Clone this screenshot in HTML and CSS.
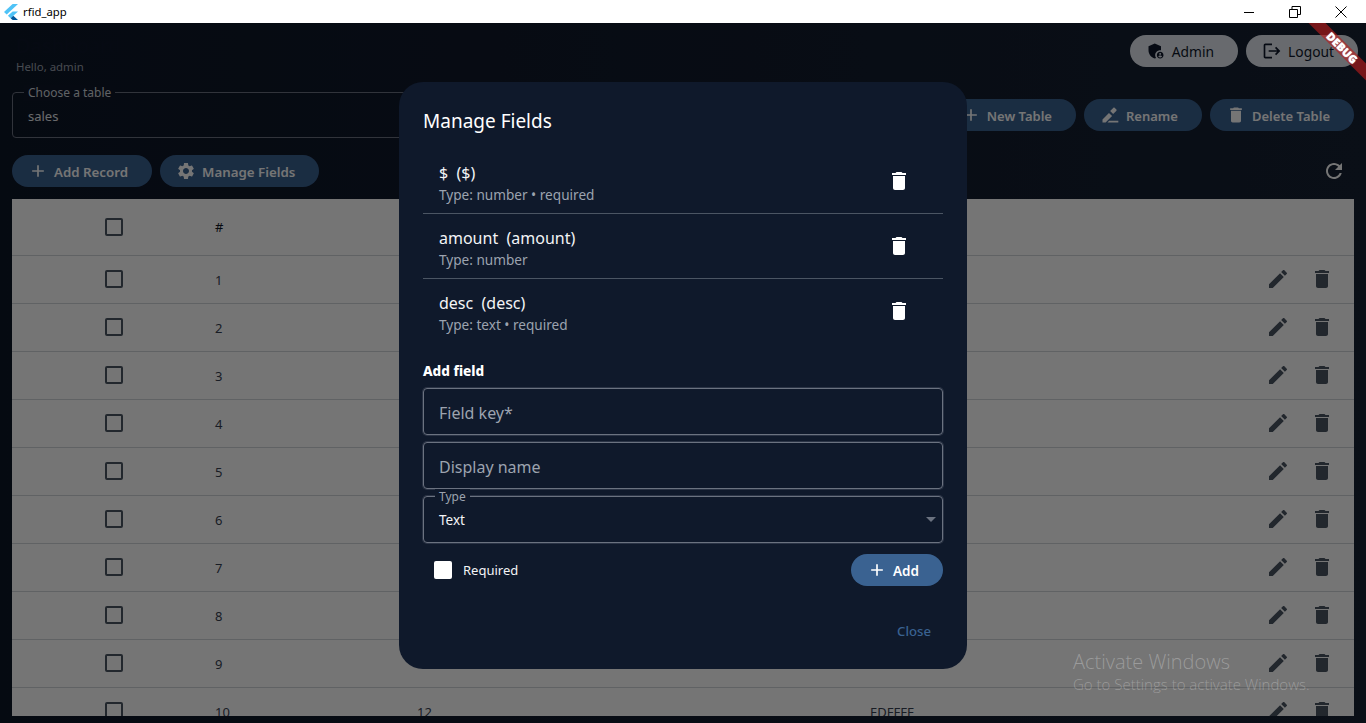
FILE: index.html
```html
<!DOCTYPE html>
<html lang="en">
<head>
<meta charset="utf-8">
<title>rfid_app</title>
<link rel="stylesheet" href="styles.css">
</head>
<body>
<svg class="sprite" width="0" height="0" aria-hidden="true">
  <defs>
    <symbol id="i-add" viewBox="0 0 24 24"><path d="M19 13h-6v6h-2v-6H5v-2h6V5h2v6h6v2z"/></symbol>
    <symbol id="i-delete" viewBox="0 0 24 24"><path d="M6 19c0 1.1.9 2 2 2h8c1.1 0 2-.9 2-2V7H6v12zM19 4h-3.5l-1-1h-5l-1 1H5v2h14V4z"/></symbol>
    <symbol id="i-edit" viewBox="0 0 24 24"><path d="M3 17.25V21h3.75L17.81 9.94l-3.75-3.75L3 17.25zM20.71 7.04c.39-.39.39-1.02 0-1.41l-2.34-2.34c-.39-.39-1.02-.39-1.41 0l-1.83 1.83 3.75 3.75 1.83-1.83z"/></symbol>
    <symbol id="i-rename" viewBox="0 0 24 24"><path d="M3 17.25V21h3.75L14.5 13.2l-3.75-3.75L3 17.25zM19.7 6.9c.39-.39.39-1.02 0-1.41l-2.2-2.2c-.39-.39-1.02-.39-1.41 0l-3.9 3.9 3.6 3.6 3.91-3.89zM11 19h11v2H9z"/></symbol>
    <symbol id="i-settings" viewBox="0 0 24 24"><path d="M19.14 12.94c.04-.3.06-.61.06-.94 0-.32-.02-.64-.07-.94l2.03-1.58c.18-.14.23-.41.12-.61l-1.92-3.32c-.12-.22-.37-.29-.59-.22l-2.39.96c-.5-.38-1.03-.7-1.62-.94l-.36-2.54c-.04-.24-.24-.41-.48-.41h-3.84c-.24 0-.43.17-.47.41l-.36 2.54c-.59.24-1.13.57-1.62.94l-2.39-.96c-.22-.08-.47 0-.59.22L2.74 8.87c-.12.21-.08.47.12.61l2.03 1.58c-.05.3-.09.63-.09.94s.02.64.07.94l-2.03 1.58c-.18.14-.23.41-.12.61l1.92 3.32c.12.22.37.29.59.22l2.39-.96c.5.38 1.03.7 1.62.94l.36 2.54c.05.24.24.41.48.41h3.84c.24 0 .44-.17.47-.41l.36-2.54c.59-.24 1.13-.56 1.62-.94l2.39.96c.22.08.47 0 .59-.22l1.92-3.32c.12-.22.07-.47-.12-.61l-2.01-1.58zM12 15.6c-1.98 0-3.6-1.62-3.6-3.6s1.62-3.6 3.6-3.6 3.6 1.62 3.6 3.6-1.62 3.6-3.6 3.6z"/></symbol>
    <symbol id="i-refresh" viewBox="0 0 24 24"><path d="M17.65 6.35C16.2 4.9 14.21 4 12 4c-4.42 0-7.99 3.58-7.99 8s3.57 8 7.99 8c3.73 0 6.84-2.55 7.73-6h-2.08c-.82 2.33-3.04 4-5.65 4-3.31 0-6-2.69-6-6s2.69-6 6-6c1.66 0 3.14.69 4.22 1.78L13 11h7V4l-2.35 2.35z"/></symbol>
    <symbol id="i-logout" viewBox="0 0 24 24"><path d="M17 7l-1.41 1.41L18.17 11H8v2h10.17l-2.58 2.58L17 17l5-5zM4 5h8V3H4c-1.1 0-2 .9-2 2v14c0 1.1.9 2 2 2h8v-2H4V5z"/></symbol>
    <symbol id="i-admin" viewBox="0 0 24 24"><path d="M17 11c.34 0 .67.04 1 .09V6.27L10.5 3 3 6.27v4.91c0 4.54 3.2 8.79 7.5 9.82.55-.13 1.08-.32 1.6-.55-.69-.98-1.1-2.17-1.1-3.45 0-3.31 2.69-6 6-6z"/><path d="M17 13c-2.21 0-4 1.79-4 4s1.79 4 4 4 4-1.79 4-4-1.79-4-4-4zm0 1.38c.62 0 1.12.51 1.12 1.12s-.51 1.12-1.12 1.12-1.12-.51-1.12-1.12.5-1.12 1.12-1.12zm0 5.37c-.93 0-1.74-.46-2.24-1.17.05-.72 1.51-1.08 2.24-1.08s2.19.36 2.24 1.08c-.5.71-1.31 1.17-2.24 1.17z"/></symbol>
  </defs>
</svg>

<header class="titlebar">
  <svg class="flutter-logo" viewBox="0 0 14 16" aria-hidden="true">
    <polygon class="fl-light" points="8.6,0 0,8 2.7,10.6 14,0"/>
    <polygon class="fl-light" points="8.6,7.4 3.9,11.8 6.6,14.3 14,7.4"/>
    <polygon class="fl-dark" points="6.6,14.3 8.6,16 14,16 9.3,11.8"/>
  </svg>
  <span class="app-name">rfid_app</span>
  <div class="win-controls">
    <svg class="win-icon" viewBox="0 0 12 12"><path d="M1 6.5h10"/></svg>
    <svg class="win-icon" viewBox="0 0 12 12"><path d="M.5 3.5h8v8h-8zM3 3.5V.5h8.500v8H8.500"/></svg>
    <svg class="win-icon" viewBox="0 0 12 12"><path d="M.5.5l11 11M11.500.5l-11 11"/></svg>
  </div>
</header>

<main class="app">
  <section class="top-row">
    <div class="greeting">
      <h1 class="page-title">Dashboard</h1>
      <p class="hello">Hello, admin</p>
    </div>
    <div class="account">
      <button class="btn btn-light"><svg class="ico"><use href="#i-admin"/></svg>Admin</button>
      <button class="btn btn-light btn-logout"><svg class="ico"><use href="#i-logout"/></svg>Logout</button>
    </div>
  </section>

  <section class="table-row">
    <div class="outlined picker">
      <span class="float-label">Choose a table</span>
      <span class="picker-value">sales</span>
    </div>
    <button class="btn btn-blue"><svg class="ico"><use href="#i-add"/></svg>New Table</button>
    <button class="btn btn-blue"><svg class="ico"><use href="#i-rename"/></svg>Rename</button>
    <button class="btn btn-blue"><svg class="ico"><use href="#i-delete"/></svg>Delete Table</button>
  </section>

  <section class="action-row">
    <button class="btn btn-blue"><svg class="ico"><use href="#i-add"/></svg>Add Record</button>
    <button class="btn btn-blue"><svg class="ico"><use href="#i-settings"/></svg>Manage Fields</button>
    <svg class="refresh"><use href="#i-refresh"/></svg>
  </section>

  <section class="table">
    <div class="tr thead"><span class="cell-check"><i class="check"></i></span><span>#</span></div>
    <div class="tr"><span class="cell-check"><i class="check"></i></span><span>1</span><span></span><span></span><span class="acts"><svg class="act"><use href="#i-edit"/></svg><svg class="act"><use href="#i-delete"/></svg></span></div>
    <div class="tr"><span class="cell-check"><i class="check"></i></span><span>2</span><span></span><span></span><span class="acts"><svg class="act"><use href="#i-edit"/></svg><svg class="act"><use href="#i-delete"/></svg></span></div>
    <div class="tr"><span class="cell-check"><i class="check"></i></span><span>3</span><span></span><span></span><span class="acts"><svg class="act"><use href="#i-edit"/></svg><svg class="act"><use href="#i-delete"/></svg></span></div>
    <div class="tr"><span class="cell-check"><i class="check"></i></span><span>4</span><span></span><span></span><span class="acts"><svg class="act"><use href="#i-edit"/></svg><svg class="act"><use href="#i-delete"/></svg></span></div>
    <div class="tr"><span class="cell-check"><i class="check"></i></span><span>5</span><span></span><span></span><span class="acts"><svg class="act"><use href="#i-edit"/></svg><svg class="act"><use href="#i-delete"/></svg></span></div>
    <div class="tr"><span class="cell-check"><i class="check"></i></span><span>6</span><span></span><span></span><span class="acts"><svg class="act"><use href="#i-edit"/></svg><svg class="act"><use href="#i-delete"/></svg></span></div>
    <div class="tr"><span class="cell-check"><i class="check"></i></span><span>7</span><span></span><span></span><span class="acts"><svg class="act"><use href="#i-edit"/></svg><svg class="act"><use href="#i-delete"/></svg></span></div>
    <div class="tr"><span class="cell-check"><i class="check"></i></span><span>8</span><span></span><span></span><span class="acts"><svg class="act"><use href="#i-edit"/></svg><svg class="act"><use href="#i-delete"/></svg></span></div>
    <div class="tr"><span class="cell-check"><i class="check"></i></span><span>9</span><span></span><span></span><span class="acts"><svg class="act"><use href="#i-edit"/></svg><svg class="act"><use href="#i-delete"/></svg></span></div>
    <div class="tr"><span class="cell-check"><i class="check"></i></span><span>10</span><span>12</span><span>EDFFFF</span><span class="acts"><svg class="act"><use href="#i-edit"/></svg><svg class="act"><use href="#i-delete"/></svg></span></div>
  </section>
</main>

<div class="scrim">
  <div class="dialog">
    <h2 class="dialog-title">Manage Fields</h2>
    <ul class="field-list">
      <li class="field-item">
        <div class="field-text"><span class="field-name">$&nbsp; ($)</span><span class="field-meta">Type: number • required</span></div>
        <svg class="field-del"><use href="#i-delete"/></svg>
      </li>
      <li class="field-item">
        <div class="field-text"><span class="field-name">amount&nbsp; (amount)</span><span class="field-meta">Type: number</span></div>
        <svg class="field-del"><use href="#i-delete"/></svg>
      </li>
      <li class="field-item">
        <div class="field-text"><span class="field-name">desc&nbsp; (desc)</span><span class="field-meta">Type: text • required</span></div>
        <svg class="field-del"><use href="#i-delete"/></svg>
      </li>
    </ul>
    <h3 class="add-title">Add field</h3>
    <div class="form">
      <div class="outlined input"><span class="placeholder">Field key*</span></div>
      <div class="outlined input"><span class="placeholder">Display name</span></div>
      <div class="outlined input select">
        <span class="float-label type-label">Type</span>
        <span class="select-value">Text</span>
        <i class="caret"></i>
      </div>
    </div>
    <div class="required-row">
      <label class="required"><i class="check-white"></i>Required</label>
      <button class="btn btn-add"><svg class="ico"><use href="#i-add"/></svg>Add</button>
    </div>
    <div class="dialog-actions"><span class="close">Close</span></div>
  </div>
</div>

<div class="debug-corner"><div class="debug-strip">DEBUG</div></div>

<div class="activate">
  <div class="activate-title">Activate Windows</div>
  <div class="activate-sub">Go to Settings to activate Windows.</div>
</div>
</body>
</html>
```

FILE: styles.css
```css
* { box-sizing: border-box; }
html, body { height: 100%; }
body {
  margin: 0;
  height: 723px;
  overflow: hidden;
  display: flex;
  flex-direction: column;
  font-family: "Noto Sans", "Open Sans", sans-serif;
  background: #0d1627;
  position: relative;
}
.sprite { position: absolute; }

/* Window title bar */
.titlebar {
  height: 23px;
  flex: none;
  background: #fff;
  display: flex;
  align-items: center;
  padding-left: 4px;
  color: #000;
}
.flutter-logo { width: 14px; height: 16px; }
.fl-light { fill: #4fc3f7; }
.fl-dark { fill: #01579b; }
.app-name { font-size: 11.3px; margin-left: 5px; }
.win-controls { margin-left: auto; display: flex; padding-right: 2px; }
.win-icon {
  width: 46px;
  height: 12px;
  fill: none;
  stroke: #000;
  stroke-width: 1;
}

/* App */
.app {
  flex: 1;
  min-height: 0;
  display: flex;
  flex-direction: column;
  padding: 12px 12px 7px;
  background: linear-gradient(90deg, #0d1627, #162132);
}
.top-row {
  height: 45px;
  display: flex;
  justify-content: space-between;
  flex: none;
}
.greeting { padding-left: 4px; }
.page-title {
  margin: 0;
  font-size: 20px;
  line-height: 22px;
  font-weight: 500;
  color: #0f172a;
}
.hello {
  margin: 3px 0 0;
  font-size: 11.4px;
  line-height: 14px;
  color: #9ca3af;
}
.account { display: flex; gap: 8px; margin-right: -4px; }

.btn {
  height: 32px;
  display: inline-flex;
  align-items: center;
  gap: 6px;
  padding: 1px 24px 0 16px;
  border: 0;
  border-radius: 16px;
  font-family: inherit;
  font-size: 13.3px;
  font-weight: 600;
  white-space: nowrap;
}
.ico { width: 20px; height: 20px; fill: currentColor; flex: none; margin-top: -1px; }
.btn-blue { background: #3a6291; color: #fff; }
.btn-light { background: #e2e8f0; color: #0f172a; font-size: 13.8px; font-weight: 400; padding-top: 0; }
.btn-light .ico { margin-top: 0; }

.table-row {
  flex: none;
  margin-top: 12px;
  display: flex;
  align-items: center;
  gap: 8px;
}
.table-row .btn { font-size: 13px; }
.outlined { border: 1px solid #6b7280; border-radius: 4px; position: relative; }
.picker {
  flex: 1;
  height: 46px;
  display: flex;
  align-items: center;
  padding: 2px 0 0 15px;
}
.float-label {
  position: absolute;
  left: 11px;
  top: -8px;
  padding: 0 4px;
  font-size: 12px;
  line-height: 16px;
  color: #d1d5db;
  background: #0e1729;
}
.picker-value { font-size: 13px; color: #e5e7eb; }

.action-row {
  flex: none;
  margin-top: 17px;
  display: flex;
  align-items: center;
  gap: 8px;
}
.refresh { width: 24px; height: 24px; margin-left: auto; margin-right: 8px; fill: #fff; }

/* Table */
.table {
  flex: 1;
  min-height: 0;
  margin-top: 12px;
  background: #fff;
  overflow: hidden;
  color: #374151;
  font-size: 13px;
}
.tr {
  display: grid;
  grid-template-columns: 203px 202px 453px 1fr 100px;
  align-items: center;
  height: 48px;
  border-bottom: 1px solid #d1d5db;
}
.thead { height: 57px; color: #111827; grid-template-columns: 203px 1fr; }
.cell-check { display: flex; justify-content: center; }
.tr:not(.thead) .cell-check { margin-bottom: 2px; }
.check {
  width: 18px;
  height: 18px;
  border: 2px solid #4b5563;
  border-radius: 2px;
}
.acts { display: flex; justify-content: flex-end; gap: 20px; padding-right: 20px; margin-bottom: 2px; }
.act { width: 24px; height: 24px; fill: #4b5563; }

/* Modal */
.scrim {
  position: absolute;
  left: 0;
  right: 0;
  top: 23px;
  bottom: 0;
  background: rgba(0, 0, 0, 0.54);
  display: flex;
  justify-content: center;
  align-items: flex-start;
  padding-top: 59px;
}
.dialog {
  width: 568px;
  background: #0f192b;
  border-radius: 24px;
  padding: 25px 24px 28px;
  color: #fff;
}
.dialog-title { margin: 0; font-size: 19px; line-height: 28px; font-weight: 400; }
.field-list { list-style: none; margin: 14px 0 0; padding: 0; }
.field-item {
  height: 65px;
  display: flex;
  align-items: center;
  padding: 0 32px 0 16px;
  border-bottom: 1px solid #4b5563;
}
.field-item:last-child { border-bottom: 0; height: 64px; }
.field-text { flex: 1; display: flex; flex-direction: column; padding-top: 4px; }
.field-name { font-size: 16px; line-height: 23px; color: #f3f4f6; }
.field-meta { font-size: 13.6px; line-height: 20px; color: #9ca3af; }
.field-del { width: 24px; height: 24px; fill: #fff; }
.add-title { margin: 19px 0 0; font-size: 13.6px; line-height: 18px; font-weight: 800; }
.form { margin-top: 8px; display: flex; flex-direction: column; gap: 7px; }
.input {
  height: 47px;
  display: flex;
  align-items: center;
  padding: 2px 0 0 15px;
  font-size: 16px;
  box-shadow: 0 0 0 1px rgba(107, 114, 128, 0.3);
}
.placeholder { color: #9ca3af; }
.select { justify-content: space-between; padding-top: 0; }
.type-label { left: 11px; color: #9ca3af; background: #0f192b; }
.select-value { font-size: 13.5px; color: #f3f4f6; }
.caret {
  width: 0;
  height: 0;
  margin-right: 6px;
  border: 5px solid transparent;
  border-top-color: #6b7280;
  border-bottom: 0;
}
.required-row {
  margin-top: 11px;
  display: flex;
  align-items: center;
  justify-content: space-between;
}
.required {
  display: flex;
  align-items: center;
  gap: 11px;
  padding: 0 0 1px 11px;
  font-size: 13px;
  color: #f3f4f6;
}
.check-white { width: 18px; height: 18px; background: #fff; border-radius: 2px; }
.btn-add { background: #3a6291; color: #fff; font-size: 13.5px; }
.dialog-actions { margin-top: 35px; display: flex; justify-content: flex-end; padding-right: 12px; }
.close { font-size: 13.2px; line-height: 20px; font-weight: 500; color: #3a6291; }

/* Debug banner */
.debug-corner {
  position: absolute;
  right: 0;
  top: 23px;
  width: 100px;
  height: 100px;
  overflow: hidden;
}
.debug-strip {
  position: absolute;
  left: 15px;
  top: 19px;
  width: 122px;
  height: 12px;
  transform: rotate(45deg);
  background: rgba(183, 28, 28, 0.63);
  color: #fff;
  font-size: 11px;
  line-height: 12px;
  font-weight: 900;
  text-align: center;
  letter-spacing: 0.2px;
  text-shadow: 0 0 1px #fff;
}

/* Windows watermark */
.activate {
  position: absolute;
  left: 1073px;
  top: 649px;
  color: rgba(255, 255, 255, 0.28);
  font-family: "Open Sans", "Noto Sans", sans-serif;
  font-weight: 300;
}
.activate-title { font-size: 20px; line-height: 25px; }
.activate-sub { font-size: 15px; line-height: 20px; }
```
